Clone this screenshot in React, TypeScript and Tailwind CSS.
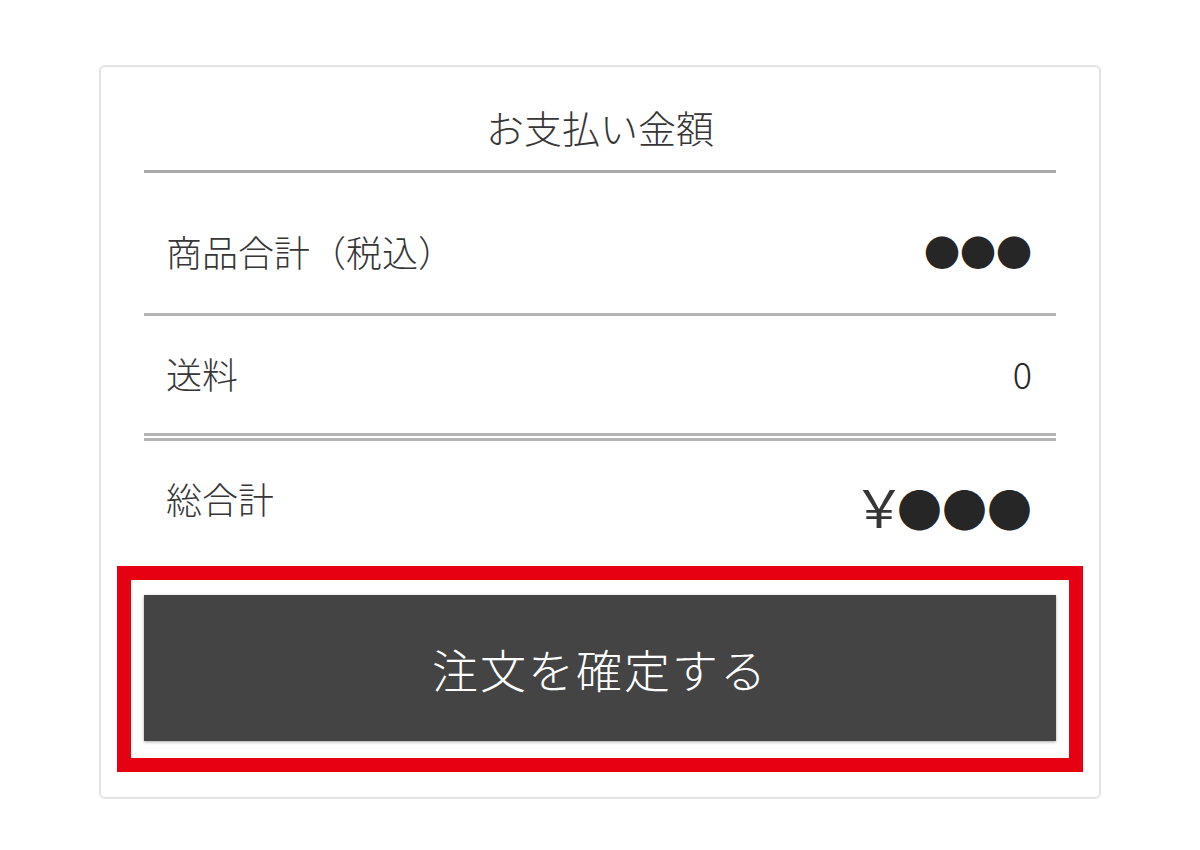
import React from "react";

// One row of the payment summary
type RowProps = {
  label: string;
  value: string;
  className?: string;
};

function SummaryRow({ label, value, className }: RowProps) {
  return (
    <div className={`flex justify-between pl-[22px] pr-[24px] text-[36px] leading-[36px] text-[#363636] ${className ?? ""}`}>
      <span>{label}</span>
      <span className="text-[#262626]">{value}</span>
    </div>
  );
}

export default function App() {
  return (
    <div
      className="min-h-[850px] bg-white pt-[65px] font-light"
      style={{ fontFamily: '"Noto Sans CJK JP", "Noto Sans", sans-serif' }}
    >
      <div className="mx-auto w-[1002px] rounded-[6px] border-2 border-[#e3e3e3] px-[43px] pb-[25px]">
        {/* Title */}
        <div className="h-[103px] pt-[41px] text-center text-[38px] leading-[38px] text-[#363636]">
          お支払い金額
        </div>
        <div className="h-[3px] bg-[#a9a9a9]" />

        <SummaryRow label="商品合計（税込）" value="●●●" className="h-[140px] pt-[60px]" />
        <div className="h-[3px] bg-[#b4b4b4]" />

        <SummaryRow label="送料" value="0" className="h-[117px] pt-[39px]" />
        {/* Double line */}
        <div className="h-[3px] bg-[#b4b4b4]" />
        <div className="h-[2px]" />
        <div className="h-[3px] bg-[#b4b4b4]" />

        {/* Total */}
        <div className="flex h-[125px] justify-between pl-[22px] pr-[24px] pt-[39px] text-[#363636]">
          <span className="text-[36px] leading-[36px]">総合計</span>
          <span className="mt-[3px] text-[45px] leading-[45px] text-[#262626]">
            <span className="-mr-[8px] text-[52px] font-normal text-[#363636]">￥</span>●●●
          </span>
        </div>

        {/* Highlighted confirm button */}
        <div className="-mx-[27px] border-[14px] border-[#e60012] px-[13px] pt-[15px] pb-[17px]">
          <button className="flex h-[146px] w-full items-center justify-center bg-[#444] text-[46px] tracking-[2px] text-white shadow-[0_1px_3px_rgba(0,0,0,0.35)]">
            注文を確定する
          </button>
        </div>
      </div>
    </div>
  );
}
